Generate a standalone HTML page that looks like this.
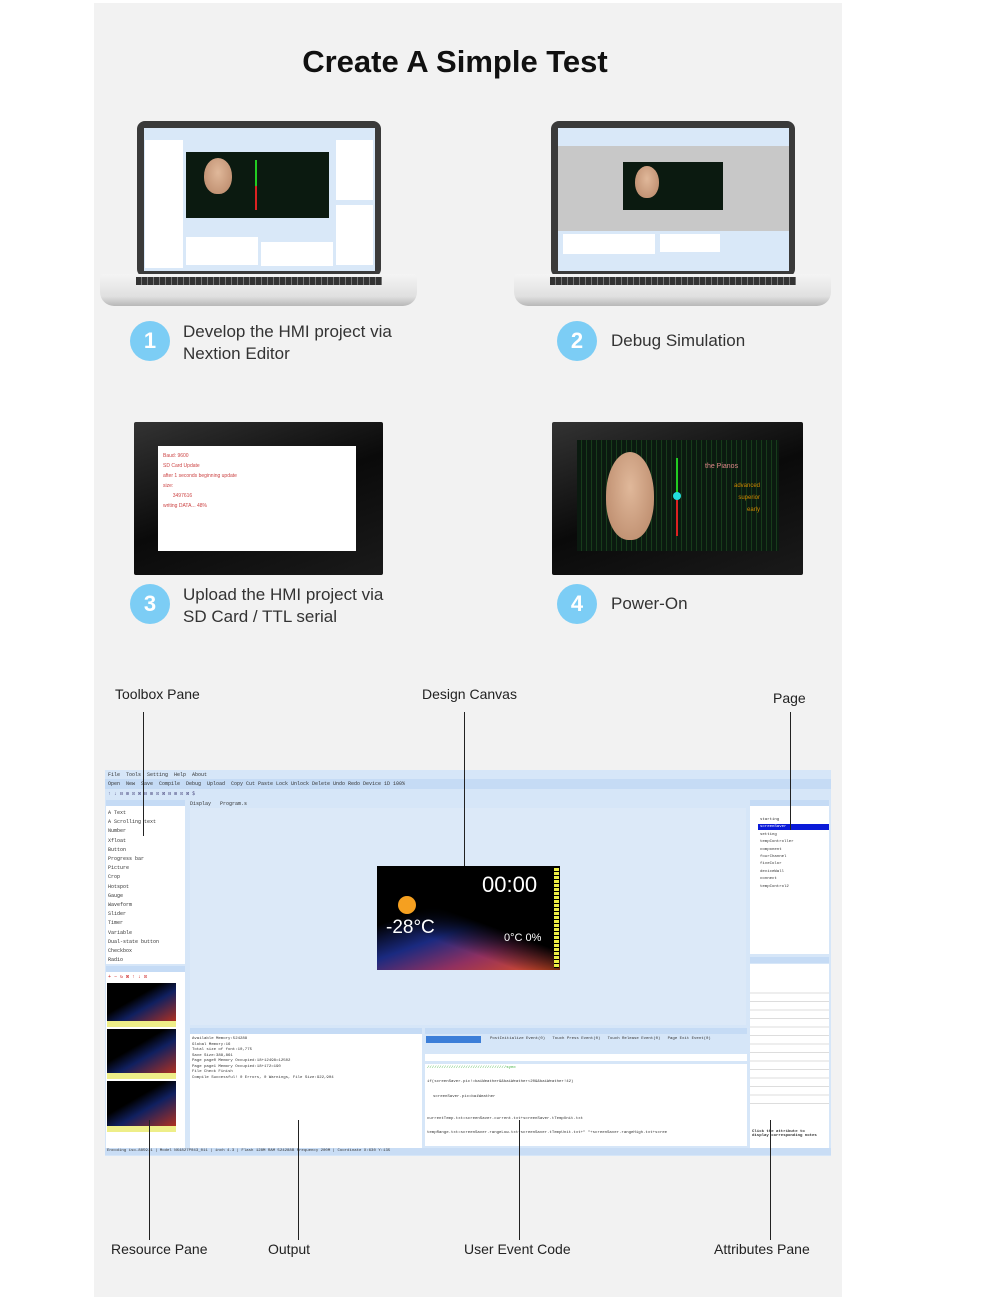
<!DOCTYPE html>
<html><head><meta charset="utf-8">
<style>
*{margin:0;padding:0;box-sizing:border-box}
body{width:1000px;height:1297px;background:#fff;position:relative;overflow:hidden;font-family:"Liberation Sans",sans-serif;color:#333}
.a{position:absolute}
.panel{left:94px;top:3px;width:748px;height:1294px;background:#f2f2f2}
.title{left:94px;width:722px;top:44px;text-align:center;font-size:31px;font-weight:bold;color:#111}
.c{width:40px;height:40px;border-radius:50%;background:#7ccdf5;color:#fff;font-weight:bold;font-size:22px;text-align:center;line-height:40px}
.t{font-size:17px;line-height:22px;color:#333}
.lab{font-size:14px;color:#222}
.vl{width:1px;background:#222}
.bez{background:#3a3a3a;border-radius:8px}
.base{background:linear-gradient(#f4f4f4,#e0e0e0 70%,#b8b8b8);border-radius:3px 3px 14px 14px}
.kb{background:repeating-linear-gradient(90deg,#333 0 5px,#777 5px 6px)}
.face{border-radius:50% 50% 46% 46%;background:radial-gradient(ellipse at 50% 40%,#e0b89a,#b78566)}
.grid{background:#0b1a10 repeating-linear-gradient(90deg,transparent 0 4px,rgba(60,160,60,.25) 4px 5px)}
.w{background:#fff}
.bl{background:#d6e6f8}
.bar{background:#c5dbf5}
.tx{font-size:5px;color:#333;font-family:"Liberation Mono",monospace;white-space:nowrap}
</style></head><body>
<div class="a panel"></div>
<div class="a title">Create A Simple Test</div>

<!-- laptop 1 -->
<div class="a bez" style="left:137px;top:121px;width:244px;height:156px"></div>
<div class="a" style="left:144px;top:128px;width:231px;height:143px;background:#d9e8f8"></div>
<div class="a w" style="left:145px;top:140px;width:38px;height:128px"></div>
<div class="a" style="left:186px;top:152px;width:143px;height:66px;background:#0b1a10"></div>
<div class="a face" style="left:204px;top:158px;width:28px;height:36px"></div>
<div class="a" style="left:255px;top:160px;width:2px;height:26px;background:#2c2"></div>
<div class="a" style="left:255px;top:186px;width:2px;height:24px;background:#d22"></div>
<div class="a w" style="left:336px;top:140px;width:37px;height:60px"></div>
<div class="a w" style="left:336px;top:205px;width:37px;height:60px"></div>
<div class="a w" style="left:186px;top:237px;width:72px;height:28px"></div>
<div class="a w" style="left:261px;top:242px;width:72px;height:24px"></div>
<div class="a base" style="left:100px;top:274px;width:317px;height:32px"></div>
<div class="a kb" style="left:136px;top:277px;width:246px;height:8px"></div>

<!-- laptop 2 -->
<div class="a bez" style="left:551px;top:121px;width:244px;height:156px"></div>
<div class="a" style="left:558px;top:128px;width:231px;height:143px;background:#c8c8c8"></div>
<div class="a" style="left:558px;top:128px;width:231px;height:18px;background:#d9e8f8"></div>
<div class="a" style="left:623px;top:162px;width:100px;height:48px;background:#0b1a10"></div>
<div class="a face" style="left:635px;top:166px;width:24px;height:32px"></div>
<div class="a" style="left:558px;top:231px;width:231px;height:40px;background:#d9e8f8"></div>
<div class="a w" style="left:563px;top:234px;width:92px;height:20px"></div>
<div class="a w" style="left:660px;top:234px;width:60px;height:18px"></div>
<div class="a base" style="left:514px;top:274px;width:317px;height:32px"></div>
<div class="a kb" style="left:550px;top:277px;width:246px;height:8px"></div>

<div class="a c" style="left:130px;top:321px">1</div>
<div class="a t" style="left:183px;top:321px">Develop the HMI project via<br>Nextion Editor</div>
<div class="a c" style="left:557px;top:321px">2</div>
<div class="a t" style="left:611px;top:330px">Debug Simulation</div>

<!-- device 3 -->
<div class="a" style="left:134px;top:422px;width:249px;height:153px;background:linear-gradient(160deg,#333,#0a0a0a 50%,#1a1a1a);border-radius:2px"></div>
<div class="a w" style="left:158px;top:446px;width:198px;height:105px;font-size:5px;color:#c44;padding:5px 5px;line-height:10px">Baud: 9600<br>SD Card Update<br>after 1 seconds beginning update<br>size:<br>&nbsp;&nbsp;&nbsp;&nbsp;&nbsp;&nbsp;&nbsp;3497616<br>writing DATA... 48%</div>
<!-- device 4 -->
<div class="a" style="left:552px;top:422px;width:251px;height:153px;background:linear-gradient(160deg,#333,#0a0a0a 50%,#1a1a1a);border-radius:2px"></div>
<div class="a grid" style="left:577px;top:440px;width:202px;height:111px"></div>
<div class="a face" style="left:606px;top:452px;width:48px;height:88px"></div>
<div class="a" style="left:676px;top:458px;width:2px;height:36px;background:#2c2"></div>
<div class="a" style="left:676px;top:494px;width:2px;height:42px;background:#d22"></div>
<div class="a" style="left:673px;top:492px;width:8px;height:8px;border-radius:50%;background:#2dd"></div>
<div class="a" style="left:705px;top:463px;font-size:7px;color:#d88">the Pianos</div>
<div class="a" style="left:734px;top:480px;font-size:6px;color:#c80;line-height:12px;text-align:right">advanced<br>superior<br>early</div>

<div class="a c" style="left:130px;top:584px">3</div>
<div class="a t" style="left:183px;top:584px">Upload the HMI project via<br>SD Card / TTL serial</div>
<div class="a c" style="left:557px;top:584px">4</div>
<div class="a t" style="left:611px;top:593px">Power-On</div>

<!-- labels -->
<div class="a lab" style="left:115px;top:686px">Toolbox Pane</div>
<div class="a lab" style="left:422px;top:686px">Design Canvas</div>
<div class="a lab" style="left:773px;top:690px">Page</div>

<!-- editor -->
<div class="a bl" style="left:105px;top:770px;width:726px;height:386px"></div>
<div class="a tx" style="left:108px;top:772px">File&nbsp; Tools&nbsp; Setting&nbsp; Help&nbsp; About</div>
<div class="a bar" style="left:105px;top:779px;width:726px;height:10px"></div>
<div class="a tx" style="left:108px;top:781px">Open&nbsp; New&nbsp; Save&nbsp; Compile&nbsp; Debug&nbsp; Upload&nbsp; Copy Cut Paste Lock Unlock Delete Undo Redo Device 1D 100%</div>
<div class="a tx" style="left:108px;top:791px;color:#558">↑ ↓ ⊟ ⊞ ⊡ ⊠ ⊟ ⊞ ⊡ ⊠ ⊟ ⊞ ⊡ ⊠ $</div>
<div class="a bar" style="left:106px;top:800px;width:79px;height:6px"></div>
<div class="a w" style="left:106px;top:806px;width:79px;height:158px"></div>
<div class="a tx" style="left:108px;top:809px;line-height:9.2px">A Text<br>A Scrolling text<br>Number<br>Xfloat<br>Button<br>Progress bar<br>Picture<br>Crop<br>Hotspot<br>Gauge<br>Waveform<br>Slider<br>Timer<br>Variable<br>Dual-state button<br>Checkbox<br>Radio</div>
<div class="a bar" style="left:106px;top:966px;width:79px;height:6px"></div>
<div class="a w" style="left:106px;top:972px;width:79px;height:178px"></div>
<div class="a tx" style="left:108px;top:974px;color:#c22">+ − ↻ ⊠ ↑ ↓ ⊡</div>
<div class="a" style="left:107px;top:983px;width:69px;height:38px;background:linear-gradient(150deg,#000 40%,#102060 60%,#b03020)"></div>
<div class="a" style="left:107px;top:1021px;width:69px;height:6px;background:#ee8"></div>
<div class="a" style="left:107px;top:1029px;width:69px;height:44px;background:linear-gradient(150deg,#000 40%,#102060 60%,#b03020)"></div>
<div class="a" style="left:107px;top:1073px;width:69px;height:6px;background:#ee8"></div>
<div class="a" style="left:107px;top:1081px;width:69px;height:45px;background:linear-gradient(150deg,#000 40%,#102060 60%,#b03020)"></div>
<div class="a" style="left:107px;top:1126px;width:69px;height:6px;background:#ee8"></div>
<div class="a tx" style="left:190px;top:801px">Display&nbsp;&nbsp; Program.s</div>
<div class="a" style="left:190px;top:808px;width:556px;height:217px;background:#dce9f8"></div>
<div class="a" style="left:377px;top:866px;width:183px;height:104px;background:linear-gradient(160deg,#000 35%,#1a2a80 55%,#903060 75%,#e05020)"></div>
<div class="a" style="left:377px;top:866px;width:183px;height:104px;background:linear-gradient(200deg,#000 50%,transparent 70%)"></div>
<div class="a" style="left:398px;top:896px;width:18px;height:18px;border-radius:50%;background:#f5a020"></div>
<div class="a" style="left:482px;top:872px;font-size:22px;color:#fff">00:00</div>
<div class="a" style="left:386px;top:917px;font-size:19px;color:#fff">-28°C</div>
<div class="a" style="left:504px;top:932px;font-size:11px;color:#fff">0°C 0%</div>
<div class="a" style="left:554px;top:868px;width:5px;height:100px;background:repeating-linear-gradient(#ee4 0 3px,#000 3px 4px)"></div>
<div class="a bar" style="left:190px;top:1028px;width:232px;height:6px"></div>
<div class="a w" style="left:190px;top:1034px;width:232px;height:116px"></div>
<div class="a tx" style="left:192px;top:1037px;line-height:5.5px;font-size:4px">Available Memory:524288<br>Global Memory:16<br>Total size of font:10,775<br>Save Size:388,861<br>Page page0 Memory Occupied:18+12498=12502<br>Page page1 Memory Occupied:18+172=190<br>File Check Finish<br>Compile Successful! 0 Errors, 0 Warnings, File Size:922,904</div>
<div class="a bar" style="left:425px;top:1028px;width:322px;height:6px"></div>
<div class="a" style="left:426px;top:1036px;width:55px;height:7px;background:#3c7ed8"></div>
<div class="a tx" style="left:490px;top:1037px;font-size:4px">PostInitialize Event(0)&nbsp;&nbsp;&nbsp;Touch Press Event(0)&nbsp;&nbsp;&nbsp;Touch Release Event(0)&nbsp;&nbsp;&nbsp;Page Exit Event(0)</div>
<div class="a w" style="left:425px;top:1054px;width:322px;height:7px"></div>
<div class="a w" style="left:425px;top:1064px;width:322px;height:82px"></div>
<div class="a tx" style="left:427px;top:1066px;color:#3a3;font-size:4px">/////////////////////////////////sync</div>
<div class="a tx" style="left:427px;top:1080px;font-size:4px">if(screenSaver.pic!=baiWeather&&baiWeather&lt;20&&baiWeather!42)</div>
<div class="a tx" style="left:433px;top:1095px;font-size:4px">screenSaver.pic=baiWeather</div>
<div class="a tx" style="left:427px;top:1117px;font-size:4px">currentTemp.txt=screenSaver.current.txt+screenSaver.tTempUnit.txt</div>
<div class="a tx" style="left:427px;top:1131px;font-size:4px">tempRange.txt=screenSaver.rangeLow.txt+screenSaver.tTempUnit.txt+" "+screenSaver.rangeHigh.txt+scree</div>
<div class="a bar" style="left:750px;top:800px;width:79px;height:6px"></div>
<div class="a w" style="left:750px;top:806px;width:79px;height:148px"></div>
<div class="a" style="left:758px;top:824px;width:71px;height:6px;background:#0a1ad8"></div>
<div class="a tx" style="left:760px;top:817px;line-height:7.4px;font-size:4px">starting<br><span style="color:#fff">screenSaver</span><br>setting<br>tempController<br>component<br>fourChannel<br>fiveColor<br>deviceWall<br>connect<br>tempControl2</div>
<div class="a bar" style="left:750px;top:957px;width:79px;height:6px"></div>
<div class="a w" style="left:750px;top:964px;width:79px;height:186px"></div>
<div class="a" style="left:750px;top:985px;width:79px;height:124px;background:repeating-linear-gradient(#fff 0 7.5px,#ddd 7.5px 8.5px)"></div>
<div class="a tx" style="left:752px;top:1130px;font-size:4px;font-weight:bold">Click the attribute to<br>display corresponding notes</div>
<div class="a" style="left:105px;top:1148px;width:726px;height:7px;background:#c9ddf5"></div>
<div class="a tx" style="left:107px;top:1149px;font-size:4px">Encoding iso-8859-1 | Model NX4827P043_011 | inch 4.3 | Flash 128M RAM 524288B Frequency 200M | Coordinate X:630 Y:135</div>

<div class="a vl" style="left:143px;top:712px;height:124px"></div>
<div class="a vl" style="left:464px;top:712px;height:154px"></div>
<div class="a vl" style="left:790px;top:712px;height:118px"></div>
<div class="a vl" style="left:149px;top:1120px;height:120px"></div>
<div class="a vl" style="left:298px;top:1120px;height:120px"></div>
<div class="a vl" style="left:519px;top:1120px;height:120px"></div>
<div class="a vl" style="left:770px;top:1120px;height:120px"></div>
<div class="a lab" style="left:111px;top:1241px">Resource Pane</div>
<div class="a lab" style="left:268px;top:1241px">Output</div>
<div class="a lab" style="left:464px;top:1241px">User Event Code</div>
<div class="a lab" style="left:714px;top:1241px">Attributes Pane</div>
</body></html>
